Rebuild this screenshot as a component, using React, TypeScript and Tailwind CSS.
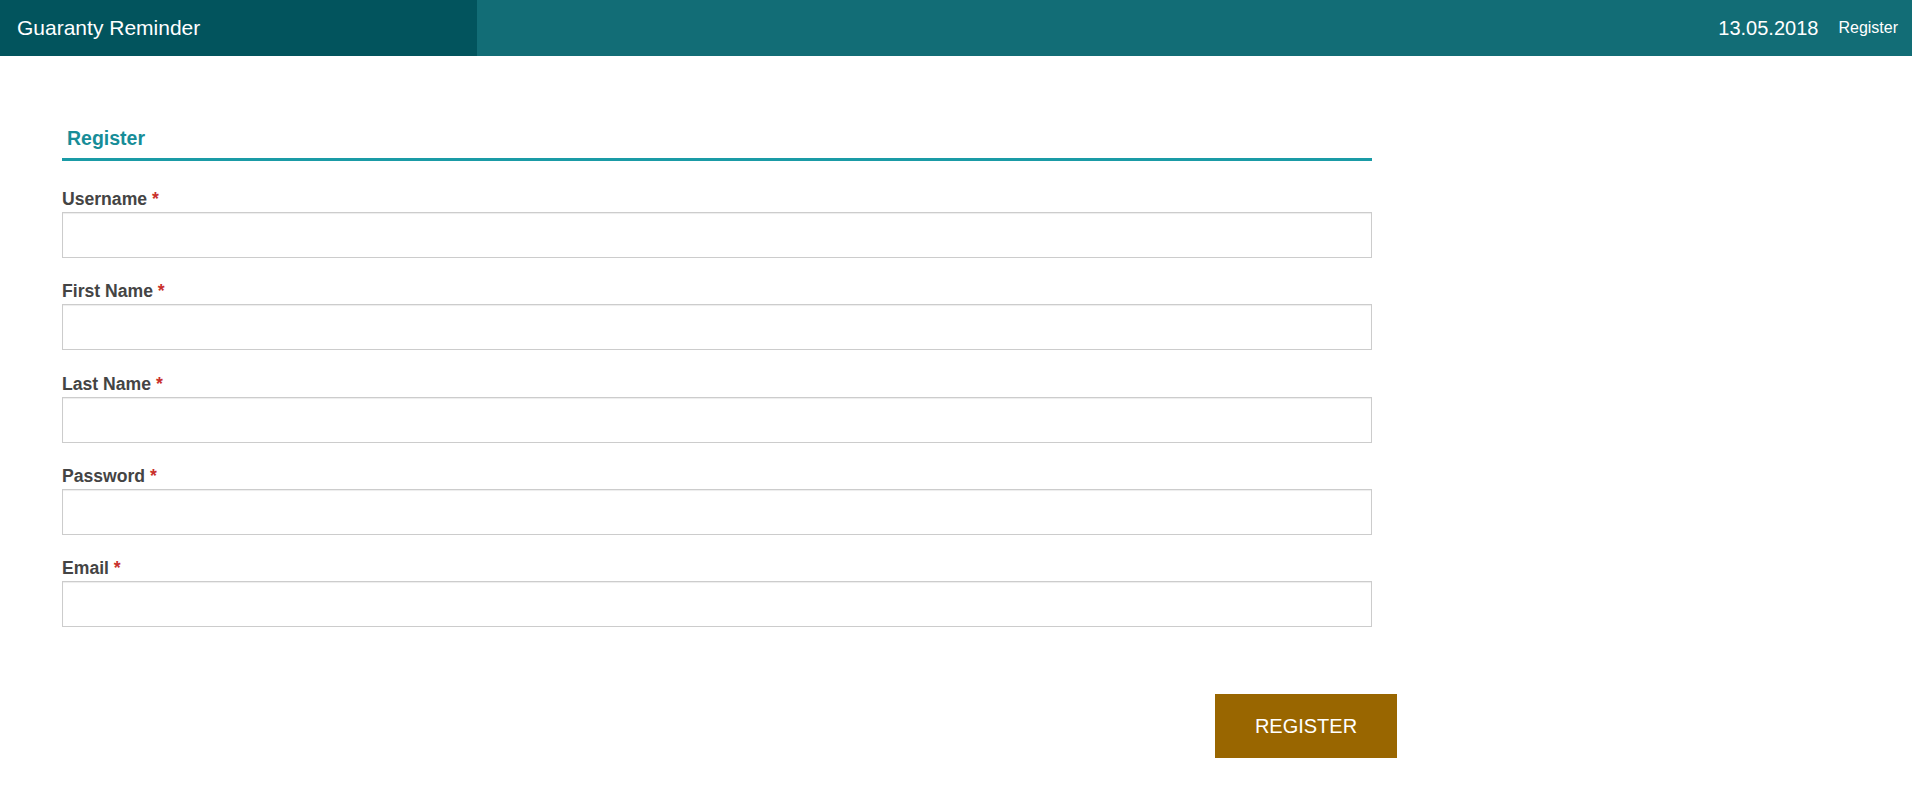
import React from 'react';

const fields = ['Username', 'First Name', 'Last Name', 'Password', 'Email'];

const App: React.FC = () => {
  return (
    <div className="min-h-screen bg-white font-['Liberation_Sans',Arial,sans-serif]">
      <header className="flex h-[56px] bg-[#126d76] text-white">
        <div className="flex w-[477px] items-center bg-[#02545d] pl-[17px] text-[21px]">
          Guaranty Reminder
        </div>
        <div className="ml-auto flex items-center pr-[14px]">
          <span className="text-[20px]">13.05.2018</span>
          <span className="ml-[20px] text-[16px]">Register</span>
        </div>
      </header>

      <main className="pl-[62px] pt-[70px]">
        <div className="w-[1310px]">
          <h2 className="border-b-[3px] border-[#1a9ba6] pb-[8px] pl-[5px] text-[19.5px] font-bold leading-[24px] text-[#178d98]">
            Register
          </h2>

          <form className="mt-[28px] flex flex-col gap-[23.25px]" onSubmit={(e) => e.preventDefault()}>
            {fields.map((field) => (
              <div key={field}>
                <label className="mb-[3px] block text-[17.6px] font-bold leading-[20px] text-[#444]">
                  {field} <span className="text-[#c9302c]">*</span>
                </label>
                <input
                  type={field === 'Password' ? 'password' : 'text'}
                  className="block h-[46px] w-full border border-[#ccc] px-3 shadow-[inset_0_1px_1px_rgba(0,0,0,0.075)] outline-none"
                />
              </div>
            ))}
          </form>
        </div>

        <div className="flex w-[1335px] justify-end pt-[67px]">
          <button className="h-[64px] w-[182px] bg-[#996600] text-[20px] text-white">
            REGISTER
          </button>
        </div>
      </main>
    </div>
  );
};

export default App;
